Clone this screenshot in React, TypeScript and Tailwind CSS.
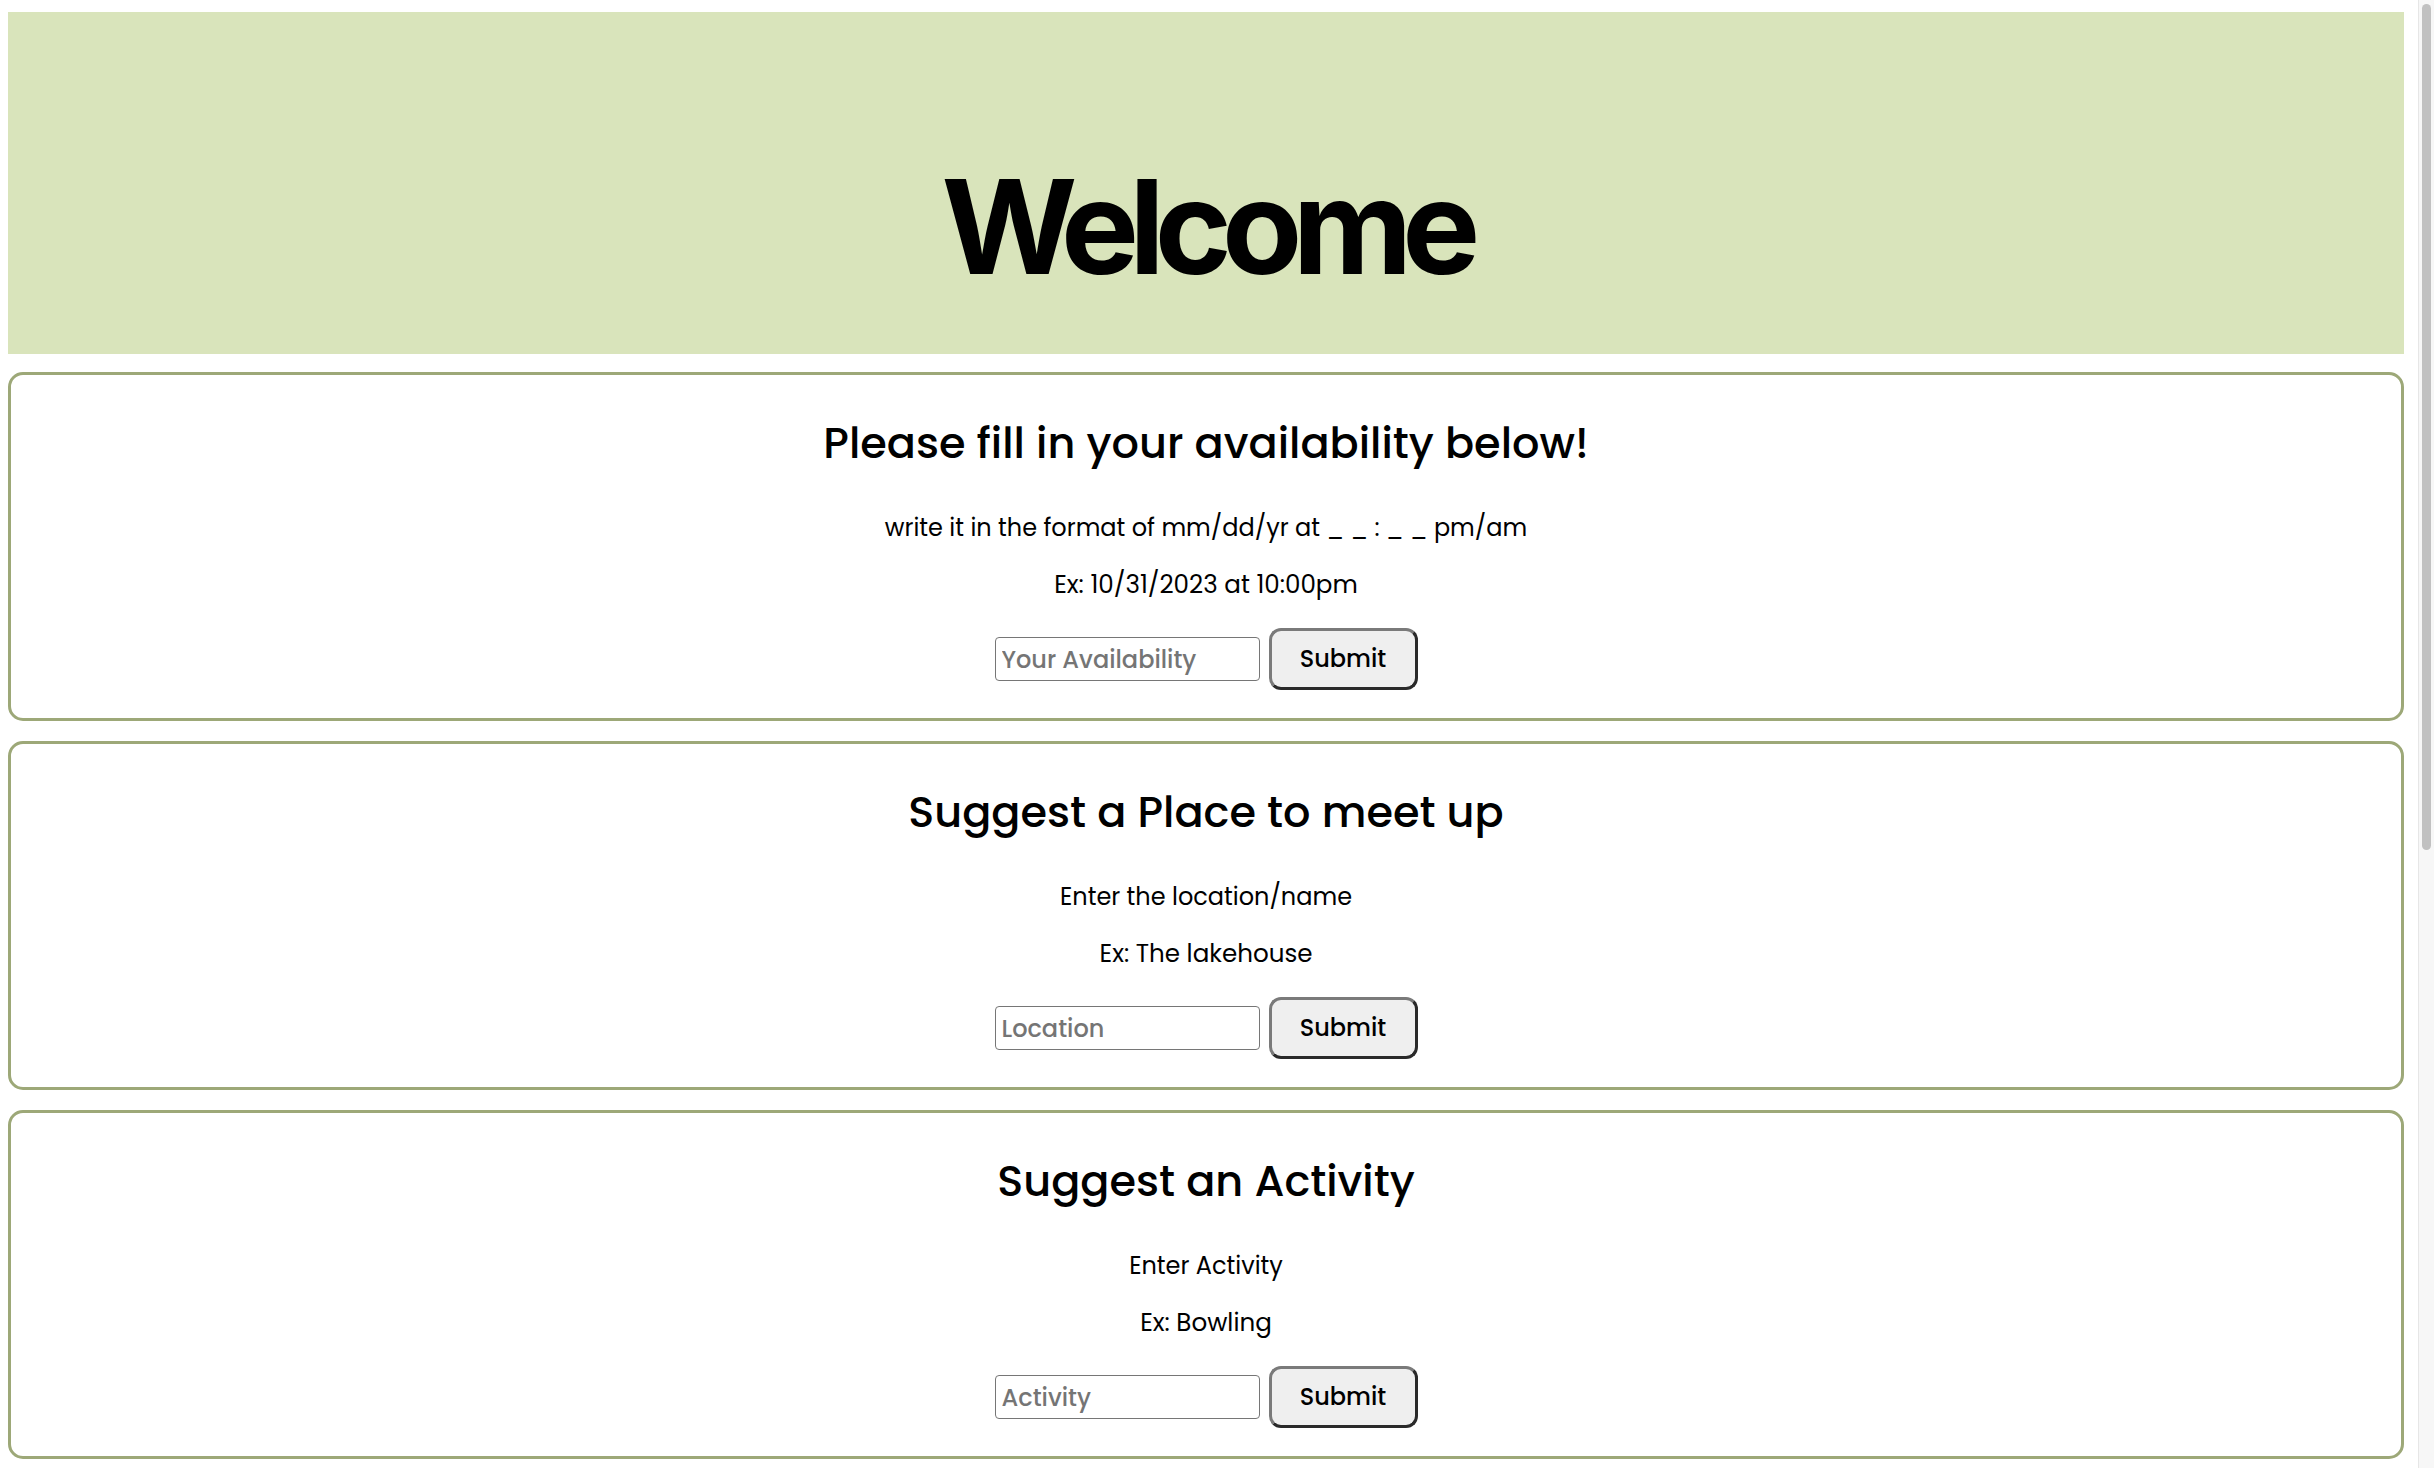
import React from 'react';

interface SectionProps {
  title: string;
  hint: string;
  example: string;
  placeholder: string;
}

const Section: React.FC<SectionProps> = ({ title, hint, example, placeholder }) => {
  return (
    <section className="h-[349px] border-[3px] border-[#9da878] rounded-[15px] bg-white flex flex-col items-center pt-[43px]">
      <h2 className="text-[43px] leading-[50px] font-medium text-black">{title}</h2>
      <p className="mt-[45px] text-[24px] leading-[30px] text-black">{hint}</p>
      <p className="mt-[27px] text-[24.6px] leading-[30px] text-black">{example}</p>
      <div className="mt-[28px] flex items-center gap-[9px]">
        <input
          type="text"
          placeholder={placeholder}
          className="w-[265px] h-[44px] border-[1.5px] border-[#767676] rounded-[4px] px-[6px] text-[24px] font-medium text-black placeholder:text-[#757575] bg-white outline-none"
        />
        <button className="w-[149px] h-[62px] rounded-[12px] bg-[#efefef] border-[3px] border-t-[#7a7a7a] border-l-[#7a7a7a] border-r-[#2a2a2a] border-b-[#2a2a2a] text-[24px] font-medium text-black">
          Submit
        </button>
      </div>
    </section>
  );
};

export default function App() {
  return (
    <div className="flex min-h-screen bg-white font-['Poppins','Inter',sans-serif]">
      <div className="flex-1 pl-[8px] pr-[14px] pt-[12px] pb-[20px]">
        <header className="h-[342px] bg-[#d9e4bb] flex justify-center">
          <h1 className="pt-[149px] font-['Inter',sans-serif] text-[131px] leading-none font-bold tracking-[-0.075em] text-black">
            Welcome
          </h1>
        </header>
        <main className="mt-[18px] flex flex-col gap-[20px]">
          <Section
            title="Please fill in your availability below!"
            hint="write it in the format of mm/dd/yr at _ _ : _ _ pm/am"
            example="Ex: 10/31/2023 at 10:00pm"
            placeholder="Your Availability"
          />
          <Section
            title="Suggest a Place to meet up"
            hint="Enter the location/name"
            example="Ex: The lakehouse"
            placeholder="Location"
          />
          <Section
            title="Suggest an Activity"
            hint="Enter Activity"
            example="Ex: Bowling"
            placeholder="Activity"
          />
        </main>
      </div>
      <div className="w-[16px] shrink-0 bg-[#f7f7f7] border-l border-[#e6e6e6] pt-[4px] flex justify-center">
        <div className="w-[9px] h-[846px] rounded-full bg-[#c1c1c1]" />
      </div>
    </div>
  );
}
